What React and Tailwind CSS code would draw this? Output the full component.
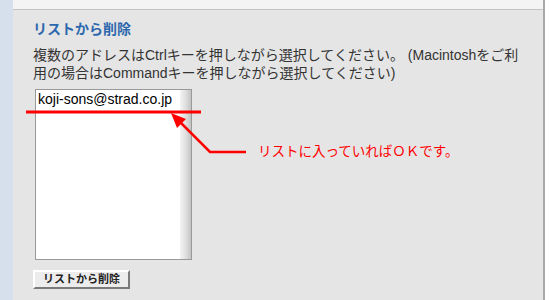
const font = { fontFamily: '"Liberation Sans", "Noto Sans CJK JP", sans-serif' };

export default function App() {
  return (
    <div
      className="relative flex h-[300px] w-[550px] overflow-hidden bg-white"
      style={font}
    >
      {/* left strip */}
      <div className="w-[13px] shrink-0 bg-[#d6dfec]" />

      {/* main panel */}
      <div className="flex w-[530px] shrink-0 flex-col">
        <div className="h-[10px] border-b border-[#c4c4c4] bg-[#f4f4f4]" />
        <div className="flex-1 bg-[#e5e5e5] pl-[20px] pt-[10px]">
          <h2 className="text-[14px] font-bold leading-[18px] text-[#2c68ad]">
            リストから削除
          </h2>
          <p className="mt-[8px] text-[14px] leading-[18px] text-[#333]">
            複数のアドレスはCtrlキーを押しながら選択してください。 (Macintoshをご利
            <br />
            用の場合はCommandキーを押しながら選択してください)
          </p>

          {/* listbox */}
          <div className="ml-[2px] mt-[7px] flex h-[171px] w-[157px] border border-[#999] bg-white">
            <div className="flex-1 px-[2px] pt-[1px] text-[14px] leading-[16px] text-black">
              koji-sons@strad.co.jp
            </div>
            <div className="w-[11px] bg-gradient-to-r from-[#f4f4f4] via-[#e0e0e0] to-[#c4c4c4]" />
          </div>

          <button className="mt-[10px] flex h-[19px] w-[97px] items-center justify-center border-2 border-b-[#7a7a7a] border-l-white border-r-[#7a7a7a] border-t-white bg-[#ececec] text-[11px] font-bold leading-none text-[#222]">
            リストから削除
          </button>
        </div>
      </div>

      {/* right edge */}
      <div className="w-[2px] shrink-0 bg-[#a8a8a8]" />
      <div className="flex-1 bg-white" />

      {/* annotation */}
      <svg
        className="pointer-events-none absolute left-0 top-0"
        width="550"
        height="300"
        viewBox="0 0 550 300"
      >
        <line x1="26" y1="112" x2="201" y2="112" stroke="#ff0000" strokeWidth="3" />
        <polyline
          points="246,152 210,152 176,118"
          fill="none"
          stroke="#ff0000"
          strokeWidth="2.5"
        />
        <polygon points="171,113 186,119 177,128" fill="#ff0000" />
      </svg>
      <div className="absolute left-[258px] top-[143px] text-[13.5px] leading-[18px] text-[#ff0000]">
        リストに入っていればＯＫです。
      </div>
    </div>
  );
}
